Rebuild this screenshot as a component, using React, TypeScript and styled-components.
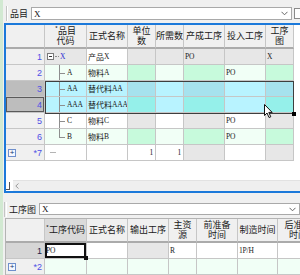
import React from "react";
import styled, { createGlobalStyle } from "styled-components";

const CJK = `"Noto Sans CJK SC", "Noto Sans CJK JP", sans-serif`;
const CELL_FONT = `"Liberation Serif", "Noto Sans CJK SC", serif`;

const GlobalStyle = createGlobalStyle`
  html, body { margin: 0; padding: 0; }
  body { width: 300px; height: 275px; overflow: hidden; font-family: ${CJK}; }
`;

const TONE = {
  w: "#ffffff",
  l: "#f1fff6",
  g: "#c7fadc",
  d: "#e7e7e7",
  c: "#b8f3ff",
  c2: "#a6e2ee",
  c3: "#95f0ea",
};
type Tone = keyof typeof TONE;

type Val = { t: Tone; v?: string; right?: boolean; focus?: boolean };
type TreeNode =
  | { kind: "root"; label: string }
  | { kind: "child"; label: string; last?: boolean }
  | { kind: "new" };
type NumState = "sel" | "focus" | "cur";

interface ItemRow {
  num: string;
  state?: NumState;
  add?: boolean;
  codeTone: Tone;
  code: TreeNode;
  cells: Val[];
}

interface StepRow {
  num: string;
  state?: NumState;
  add?: boolean;
  cells: Val[];
}

const G1_COLS = "39px 42px 41px 28px 28px 41px 41px 28px";
const G2_COLS = "39px 42px 41px 41px 28px 41px 40px 41px";

const itemHeads = ["", "*品目\n代码", "正式名称", "单位\n数", "所需数", "产成工序", "投入工序", "工序\n图"];
const stepHeads = ["", "*工序代码", "正式名称", "输出工序", "主资\n源", "前准备\n时间", "制造时间", "后准备\n时间"];

const itemRows: ItemRow[] = [
  {
    num: "1",
    codeTone: "d",
    code: { kind: "root", label: "X" },
    cells: [{ t: "w", v: "产品X" }, { t: "d" }, { t: "d" }, { t: "d", v: "PO" }, { t: "d" }, { t: "d", v: "X" }],
  },
  {
    num: "2",
    codeTone: "l",
    code: { kind: "child", label: "A" },
    cells: [{ t: "l", v: "物料A" }, { t: "g" }, { t: "l" }, { t: "g" }, { t: "l", v: "PO" }, { t: "g" }],
  },
  {
    num: "3",
    state: "sel",
    codeTone: "c",
    code: { kind: "child", label: "AA" },
    cells: [{ t: "c", v: "替代料AA" }, { t: "c2" }, { t: "c" }, { t: "c2" }, { t: "c" }, { t: "c2" }],
  },
  {
    num: "4",
    state: "focus",
    codeTone: "c",
    code: { kind: "child", label: "AAA" },
    cells: [{ t: "c", v: "替代料AAA" }, { t: "c3" }, { t: "c" }, { t: "c3" }, { t: "c" }, { t: "c3" }],
  },
  {
    num: "5",
    codeTone: "w",
    code: { kind: "child", label: "C" },
    cells: [{ t: "w", v: "物料C" }, { t: "d" }, { t: "w" }, { t: "d" }, { t: "w", v: "PO" }, { t: "d" }],
  },
  {
    num: "6",
    codeTone: "l",
    code: { kind: "child", label: "B", last: true },
    cells: [{ t: "l", v: "物料B" }, { t: "g" }, { t: "l" }, { t: "g" }, { t: "l", v: "PO" }, { t: "g" }],
  },
  {
    num: "*7",
    add: true,
    codeTone: "w",
    code: { kind: "new" },
    cells: [
      { t: "w" },
      { t: "w", v: "1", right: true },
      { t: "w", v: "1", right: true },
      { t: "d" },
      { t: "w" },
      { t: "d" },
    ],
  },
];

const stepRows: StepRow[] = [
  {
    num: "1",
    state: "cur",
    cells: [
      { t: "w", v: "PO", focus: true },
      { t: "w" },
      { t: "d" },
      { t: "w", v: "R" },
      { t: "w" },
      { t: "w", v: "1P/H" },
      { t: "w" },
    ],
  },
  {
    num: "*2",
    add: true,
    cells: [{ t: "l" }, { t: "l" }, { t: "l" }, { t: "l" }, { t: "l" }, { t: "l" }, { t: "l" }],
  },
];

const Screen = styled.div`
  width: 300px;
  height: 275px;
  overflow: hidden;
  box-sizing: border-box;
  background: #f0f0f0;
  border-left: 3px solid #d2e9d2;
  display: flex;
  flex-direction: column;
`;

const Toolbar = styled.div<{ $h: number; $pt: number }>`
  display: flex;
  align-items: center;
  box-sizing: border-box;
  height: ${(p) => p.$h}px;
  padding-top: ${(p) => p.$pt}px;
  flex-shrink: 0;
`;

const Grip = styled.span<{ $ml: number }>`
  width: 1px;
  height: 15px;
  margin-left: ${(p) => p.$ml}px;
  border-left: 1px solid #c4c4c4;
  border-right: 1px solid #ffffff;
`;

const Label = styled.span`
  margin: 0 3px 0 2px;
  font-family: ${CJK};
  font-size: 9px;
  color: #202020;
  white-space: nowrap;
`;

const Combo = styled.div<{ $w: number; $h: number }>`
  box-sizing: border-box;
  width: ${(p) => p.$w}px;
  height: ${(p) => p.$h}px;
  flex-shrink: 0;
  background: #fff;
  border: 1px solid #a9a9a9;
  display: flex;
  align-items: center;
  justify-content: space-between;
  padding: 0 3px 0 2px;
  font-family: ${CELL_FONT};
  font-size: 9px;
  color: #111;
`;

const SideBox = styled.span`
  box-sizing: border-box;
  width: 9px;
  height: 11px;
  margin-left: 2px;
  flex-shrink: 0;
  background: #fff;
  border: 1px solid #8a8a8a;
`;

const Pane = styled.div`
  margin-left: 1px;
  height: 170px;
  box-sizing: border-box;
  border: 2px solid #1b79da;
  border-right: none;
  background: #fff;
  display: flex;
  flex-direction: column;
  flex-shrink: 0;
`;

const GridArea = styled.div`
  position: relative;
  flex: 1;
`;

const Grid = styled.div<{ $cols: string; $head: number }>`
  display: grid;
  grid-template-columns: ${(p) => p.$cols};
  grid-template-rows: ${(p) => p.$head}px;
  grid-auto-rows: 16px;
  width: max-content;
`;

const Head = styled.div<{ $active?: boolean }>`
  box-sizing: border-box;
  background: ${(p) => (p.$active ? "#dadada" : "#f0f0f0")};
  border-right: 1px solid #c6c6c6;
  border-bottom: 2px solid #ababab;
  display: flex;
  align-items: center;
  justify-content: center;
  text-align: center;
  font-family: ${CJK};
  font-size: 9px;
  line-height: 10px;
  color: #202020;
  white-space: pre-line;
  overflow: hidden;
`;

const Star = styled.span`
  font-size: 6px;
  vertical-align: top;
  line-height: 6px;
`;

const RowNum = styled.div<{ $state?: NumState }>`
  box-sizing: border-box;
  background: ${(p) => (p.$state === "sel" || p.$state === "focus" ? "#bdbdbd" : p.$state === "cur" ? "#d6d6d6" : "#f0f0f0")};
  box-shadow: ${(p) => (p.$state === "focus" ? "inset 0 0 0 1px #5a5a5a" : "none")};
  border-right: 1px solid #c6c6c6;
  border-bottom: 1px solid #c6c6c6;
  display: flex;
  align-items: center;
  justify-content: space-between;
  padding: 0 2px;
  font-family: "Liberation Sans", sans-serif;
  font-size: 9px;
  color: ${(p) => (p.$state === "cur" ? "#23234a" : "#4f4fe6")};
`;

const AddButton = styled.span`
  box-sizing: border-box;
  width: 8px;
  height: 8px;
  border: 1px solid #6f8fcc;
  background: #f5f8ff;
  color: #203070;
  font-size: 8px;
  line-height: 6px;
  text-align: center;
`;

const Cell = styled.div<{ $bg: string; $right?: boolean; $focus?: boolean }>`
  position: relative;
  box-sizing: border-box;
  background: ${(p) => p.$bg};
  border-right: 1px solid #c6c6c6;
  border-bottom: 1px solid #c6c6c6;
  box-shadow: ${(p) => (p.$focus ? "inset 0 0 0 2px #111" : "none")};
  display: flex;
  align-items: center;
  justify-content: ${(p) => (p.$right ? "flex-end" : "flex-start")};
  padding: 0 2px 0 1px;
  font-family: ${CELL_FONT};
  font-size: 8px;
  color: #1a1a1a;
  white-space: nowrap;
  overflow: ${(p) => (p.$focus ? "visible" : "hidden")};

  ${(p) =>
    p.$focus
      ? `&::after {
    content: "";
    position: absolute;
    right: -2px;
    bottom: -2px;
    width: 4px;
    height: 4px;
    background: #111;
    z-index: 2;
  }`
      : ""}
`;

const Latin = styled.span`
  font-family: "Liberation Serif", serif;
  font-size: 7.5px;
  letter-spacing: -0.2px;
`;

const Expander = styled.span`
  position: relative;
  box-sizing: border-box;
  width: 7px;
  height: 7px;
  margin-left: 1px;
  flex-shrink: 0;
  border: 1px solid #7a7a7a;
  background: #fff;

  &::after {
    content: "";
    position: absolute;
    left: 1px;
    right: 1px;
    top: 2px;
    height: 1px;
    background: #333;
  }
`;

const Dots = styled.span`
  width: 4px;
  margin: 0 1px;
  border-top: 1px dotted #8a8a8a;
`;

const RootLabel = styled.span`
  color: #2a2ad2;
`;

const Branch = styled.span<{ $last?: boolean }>`
  position: relative;
  align-self: stretch;
  width: 7px;
  margin-left: 13px;
  flex-shrink: 0;

  &::before {
    content: "";
    position: absolute;
    left: 0;
    top: 0;
    height: ${(p) => (p.$last ? "50%" : "100%")};
    border-left: 1px solid #8e8e8e;
  }

  &::after {
    content: "";
    position: absolute;
    left: 0;
    top: 50%;
    width: 6px;
    border-top: 1px solid #8e8e8e;
  }
`;

const NewDash = styled.span`
  width: 6px;
  margin-left: 4px;
  border-top: 1px solid #b4b4b4;
`;

const Selection = styled.div`
  position: absolute;
  left: 39px;
  top: 56px;
  width: 249px;
  height: 33px;
  box-sizing: border-box;
  border: 1px solid #3e3e3e;
  pointer-events: none;

  &::after {
    content: "";
    position: absolute;
    right: -3px;
    bottom: -3px;
    width: 4px;
    height: 4px;
    background: #000;
  }
`;

const Pointer = styled.svg`
  position: absolute;
  left: 258px;
  top: 79px;
`;

const HScroll = styled.div`
  display: flex;
  height: 11px;
  flex-shrink: 0;
`;

const Corner = styled.div`
  width: 7px;
  position: relative;
  background: #fff;

  &::after {
    content: "";
    position: absolute;
    left: 0;
    top: 2px;
    width: 3px;
    height: 7px;
    border-right: 1px solid #555;
    border-bottom: 1px solid #555;
  }
`;

const Track = styled.div`
  flex: 1;
  background: #efefef;
  border-top: 1px solid #e2e2e2;
  display: flex;
  align-items: center;
  padding-left: 2px;
`;

const LowerGrid = styled.div`
  flex: 1;
  margin-left: 2px;
  background: #fff;
  border-top: 1px solid #b4b4b4;
  border-left: 1px solid #b4b4b4;
`;

const HAN = /([\u3400-\u9fff]+)/;

// cell values: CJK at full size, Latin runs in the smaller mincho-like face
const Mixed: React.FC<{ text?: string }> = ({ text }) => {
  if (!text) return null;
  return (
    <>
      {text
        .split(HAN)
        .filter(Boolean)
        .map((part, i) => (HAN.test(part) ? <span key={i}>{part}</span> : <Latin key={i}>{part}</Latin>))}
    </>
  );
};

const Chevron = () => (
  <svg width="7" height="5" viewBox="0 0 7 5">
    <polyline points="0.5,0.8 3.5,3.8 6.5,0.8" fill="none" stroke="#666" strokeWidth="1" />
  </svg>
);

const HeadText: React.FC<{ text: string }> = ({ text }) =>
  text.startsWith("*") ? (
    <span>
      <Star>*</Star>
      {text.slice(1)}
    </span>
  ) : (
    <span>{text}</span>
  );

const TreeCode: React.FC<{ node: TreeNode }> = ({ node }) => {
  if (node.kind === "root") {
    return (
      <>
        <Expander />
        <Dots />
        <RootLabel>
          <Mixed text={node.label} />
        </RootLabel>
      </>
    );
  }
  if (node.kind === "new") return <NewDash />;
  return (
    <>
      <Branch $last={node.last} />
      <span style={{ marginLeft: 1 }}>
        <Mixed text={node.label} />
      </span>
    </>
  );
};

const NumCell: React.FC<{ num: string; state?: NumState; add?: boolean }> = ({ num, state, add }) => (
  <RowNum $state={state}>
    {add ? <AddButton>+</AddButton> : <span />}
    <span>{num}</span>
  </RowNum>
);

const App: React.FC = () => {
  return (
    <>
      <GlobalStyle />
      <Screen>
        <Toolbar $h={23} $pt={4}>
          <Grip $ml={3} />
          <Label>品目</Label>
          <Combo $w={261} $h={13}>
            <span>X</span>
            <Chevron />
          </Combo>
          <SideBox />
        </Toolbar>

        <Pane>
          <GridArea>
            <Grid $cols={G1_COLS} $head={24}>
              {itemHeads.map((h, i) => (
                <Head key={"h" + i}>
                  <HeadText text={h} />
                </Head>
              ))}
              {itemRows.map((row) => (
                <React.Fragment key={row.num}>
                  <NumCell num={row.num} state={row.state} add={row.add} />
                  <Cell $bg={TONE[row.codeTone]}>
                    <TreeCode node={row.code} />
                  </Cell>
                  {row.cells.map((c, i) => (
                    <Cell key={i} $bg={TONE[c.t]} $right={c.right}>
                      <Mixed text={c.v} />
                    </Cell>
                  ))}
                </React.Fragment>
              ))}
            </Grid>
            <Selection />
            <Pointer width="10" height="15" viewBox="0 0 10 15">
              <path
                d="M0.5 0.5 L0.5 11.5 L3 9 L5 13.5 L6.8 12.8 L4.8 8.4 L8.2 8.4 Z"
                fill="#fff"
                stroke="#111"
                strokeWidth="1"
                strokeLinejoin="round"
              />
            </Pointer>
          </GridArea>
          <HScroll>
            <Corner />
            <Track>
              <svg width="4" height="6" viewBox="0 0 4 6">
                <polyline points="3.5,0.5 0.8,3 3.5,5.5" fill="none" stroke="#9a9a9a" strokeWidth="1" />
              </svg>
            </Track>
          </HScroll>
        </Pane>

        <Toolbar $h={25} $pt={7}>
          <Grip $ml={1} />
          <Label>工序图</Label>
          <Combo $w={261} $h={12}>
            <span>X</span>
            <Chevron />
          </Combo>
        </Toolbar>

        <LowerGrid>
          <Grid $cols={G2_COLS} $head={24}>
            {stepHeads.map((h, i) => (
              <Head key={"s" + i} $active={i === 1}>
                <HeadText text={h} />
              </Head>
            ))}
            {stepRows.map((row) => (
              <React.Fragment key={row.num}>
                <NumCell num={row.num} state={row.state} add={row.add} />
                {row.cells.map((c, i) => (
                  <Cell key={i} $bg={TONE[c.t]} $right={c.right} $focus={c.focus}>
                    <Mixed text={c.v} />
                  </Cell>
                ))}
              </React.Fragment>
            ))}
          </Grid>
        </LowerGrid>
      </Screen>
    </>
  );
};

export default App;
